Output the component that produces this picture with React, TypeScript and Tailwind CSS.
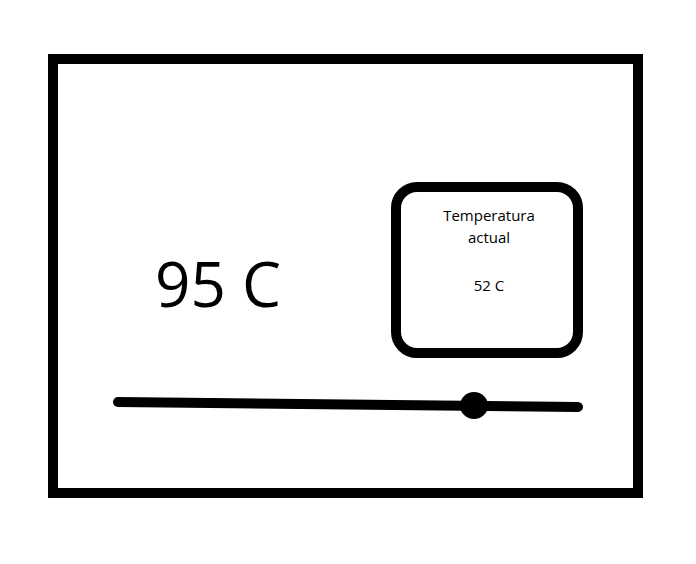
import { useState } from "react";

export default function App() {
  const [target, setTarget] = useState(95);
  return (
    <div className="min-h-screen bg-white pt-[54px] pr-[53px] pb-[66px] pl-12 font-['Open_Sans','Noto_Sans',sans-serif] text-black">
      <main className="border-10 border-black pt-[118px] pr-[50px] pb-[66px] pl-[55px]">
        <div className="flex items-start justify-between">
          <label htmlFor="target" className="pt-[59px] pl-[42px] text-[62px] leading-[84px] whitespace-nowrap">
            {target} C
          </label>
          <section className="h-44 w-48 rounded-[26px] border-10 border-black pt-3 pl-1 text-center text-[15px] leading-[22px]">
            <h2>
              Temperatura
              <br />
              actual
            </h2>
            <p className="mt-[26px]">52 C</p>
          </section>
        </div>
        <div className="relative mt-[30px] h-[34px]">
          <svg viewBox="0 0 470 34" preserveAspectRatio="none" className="h-full w-full overflow-visible" aria-hidden="true">
            <path d="M5 14L465 19" stroke="black" strokeWidth="10" strokeLinecap="round" />
            <ellipse cx={target * 3.8} cy="17.5" rx="14" ry="13.5" />
          </svg>
          <input
            id="target"
            type="range"
            min="0"
            max="120"
            value={target}
            onChange={(e) => setTarget(Number(e.target.value))}
            className="absolute inset-0 h-full w-full cursor-pointer opacity-0"
          />
        </div>
      </main>
    </div>
  );
}
